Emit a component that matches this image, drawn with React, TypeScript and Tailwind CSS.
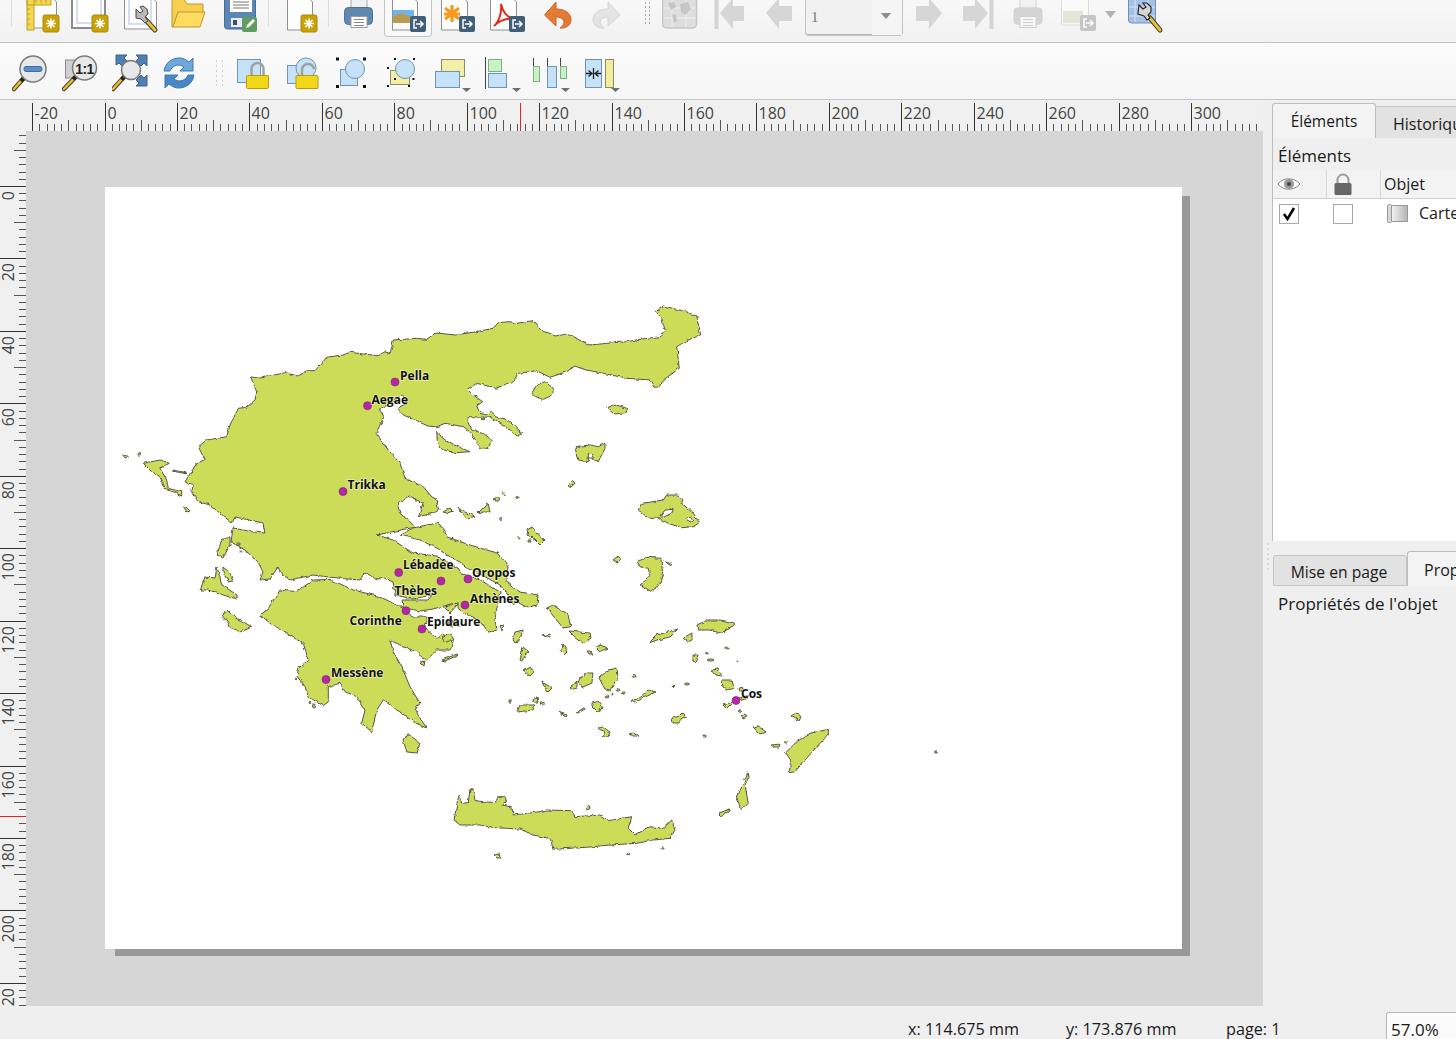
import React from "react";

const LAND: string[] = [
  // mainland
  "250.7,377 260,378 270,376 285,372.7 298,376 308,370.7 315,370.7 326.7,357.3 343,355 350,352.3 378,355.7 385,351.7 390,354 393.3,340 416.7,338.3 426.7,339.3 435,333.3 440,333.3 455,335 473,332.3 493,328.3 498.3,322.7 510,321.7 516.7,323.3 533,320.7 541.7,331 550,333.3 555,336 566.7,334 590,345 606.7,343.3 626.7,341.7 640,339.3 660,336.7 665,330 661.7,318.3 656,311.7 663.3,306 686.7,311.7 696.7,316.7 700.7,335 686.7,340.7 676.7,346.7 679.3,368.3 663.3,380 660,386.7 654,387.3 650,380 626.7,378.3 603.3,373.3 583.3,369.3 575,366 566.7,371.7 550,377.3 536.7,370.7 518.3,373.3 515,380 496.7,388.3 476.7,383.3 467.3,389.3 473.3,395 482.7,401.7 476.7,406 480,413.3 486.7,415 491.7,410.7 495,416.7 506.7,419.3 522.7,433.3 517.3,436 508.3,428.3 490,417.3 468.3,416.7 466.7,420 471.7,430 483.3,433.3 491.7,440 488.3,448.3 480,448.3 471.7,433.3 463.3,426.7 445,423.3 436.7,426.7 428,426 403.3,415 397.3,408.3 406.7,403.3 403.3,395 396.7,398.3 386.7,405 379.3,409.3 384,416.7 376,433.3 388.3,450 400,463.3 405,478.3 423.3,486.7 432,497 436,499 439,510 434,513 418.3,516.7 423.3,503.3 410,496.7 397.3,503.3 400,513.3 411.7,523.3 415,527 377,535 393,540 413,553 437,556 458,568 462,574 470,576 482,581 500,592 497,607 495,620 497,630 488,632 482,623 473,617 463,613 458,608 458,602 433,609 420,611 410,609 403,607 402,600 428,600 432,595 413,599 395,595 393,582 382,577 377,580 365,572 360,580 337,578 313,575 290,580 282,575 278,567 270,579 260,580 263,572 258,562 245,550 231,542 232,535 233,528 253,532 265,533 263,523 235,517 232,523 210,505 198.3,501.7 191.7,491.7 193.3,485 185,481.7 196.7,463.3 205,460 198.3,446.7 206.7,440 226.7,436.7 230,425 238.3,408.3 246.7,407.3 255,400 256.7,391.7",
  // Peloponnese
  "260.7,615 268.3,608.3 280,590 296.7,591.7 313.3,580 330,579.3 353.3,590 380,596.7 406.7,610 411.7,616.7 428.3,617.3 423.3,626.7 436.7,638.3 443,634 453.3,643.3 450,650 436.7,650 426.7,660 416.7,651.7 403.3,646.7 390,640 393.3,651.7 401.7,666.7 410,686.7 420,703.3 415,710 426.7,728.3 413.3,721.7 400,712 383.3,700 376.7,710 371.7,731.7 361.7,723.3 365,710 356.7,696.7 345,691.7 340,683.3 328.3,686.7 328.3,701.7 323.3,705.7 308.3,696.7 305,686.7 297.3,676.7 298.3,668.3 308.3,660 303.3,643.3 283.3,631.7 270,623.3",
  // Evia
  "400,535 413,528 437,523 443,527 447,537 470,545 497,553 508,565 507,582 520,592 538,595 537,605 528,608 517,602 513,605 508,595 500,585 482,575 470,570 460,562 447,555 437,548 420,540",
  // Ionian
  "143.3,463.3 160,460 169.3,463.3 160,468.3 166.7,480 168.3,488.3 181.7,491.7 181.7,496 165,488.3 160,476.7 151.7,471.7",
  "223,538 230,538 230,545 223,558 217,555 220,545",
  "217,567 222,585 237,595 237,599 223,595 217,592 207,590 200,590 205,577 215,578",
  "223,567 230,573 233,580 228,581 223,573",
  "222,615 228,610 235,617 252,627 240,632 230,627",
  "403,740 407,733 420,743 417,753 407,752",
  "183,506 186,507 190,511 187,512",
  "173,470 187,473 187,474 173,471",
  // Saronic
  "445,608 455,602 458,604 450,613",
  "449,622 458,620 459,626 451,627",
  "442,638 450,633 454,640 445,642",
  "442,660 457,654 458,655 445,661",
  "420,662 425,661 424,666",
  "500,627 503,624 502,631",
  // North Aegean
  "531.7,393.3 536.7,385 545,381.7 553.3,388.3 552.7,395 543.3,399.3 535,396.7",
  "607.7,407.3 616.7,405 626.7,408.3 625,412.7 615,414",
  "436.7,430.7 441.7,437.3 450,443.3 470,451.7 456.7,452.7 443.3,450 440,448.3 437.3,441.7",
  "575,446.7 590,445 598.3,446.7 605,443.3 605,448.3 598.3,461.7 593.3,460 588.3,453.3 588.3,461.7 578.3,460 576.7,456.7",
  "568.3,485 572.7,480.7 575,483.3 570,487.7",
  "638.3,510 641.7,503.3 663.3,500 666.7,495 678.3,495 683.3,500 681.7,503.3 693.3,513.3 699.3,522.7 693.3,526.7 681.7,527.7 670,524 658.3,518.3 646.7,516.7",
  "637.3,561.7 646.7,557.3 661.7,558.3 663.3,570 660,583.3 651.7,591.7 640,585 650,576.7 648.3,568.3 640,566.7",
  "665,561.7 671.7,564 671,565.5 666,563",
  "613,560 618,556 621,560 617,563",
  "443,512 450,508 453,511 447,513",
  "458,508 465,512 475,516 468,519 463,515",
  "478,513 488,503 490,512 483,512",
  "527,530 532,527 537,533 545,540 540,545 535,540 528,535",
  // Cyclades, Dodecanese
  "546.7,608 553,605 568,615 570.7,626.7 563,628 555,618",
  "569,631 590,633 591,638 583,643 575,637",
  "513,640 515,632 523,630 522,637 515,643",
  "520,660 523,647 529,652 525,655 522,661",
  "560,650 563,644 568,652 565,655",
  "543,636 550,634 551,637",
  "595,647 600,645 608,648 600,652",
  "587,651 591,651 593,654 589,654",
  "524,670 530,667 534,672 530,676 526,673",
  "542,682 552,688 548,692 545,688",
  "580,678 587,673 593,673 592,683 583,687 578,683",
  "570,687 577,681 577,688 573,689",
  "599,678 608,670 617,668 618,678 610,690 605,689",
  "517,712 520,705 527,705 535,705 533,710 518,712",
  "533,699 537,698 538,702 534,702",
  "540,702 544,702 544,705 541,705",
  "576,713 585,707 585,709 578,713",
  "558,712 567,715 566,717 559,713",
  "592,702 598,701 603,708 597,711 592,706",
  "631,701 640,697 648,690 656,692 643,698 635,703",
  "597,728 602,726 610,732 608,737 602,737 606,732 601,730",
  "629,734 633,733 639,736 632,736",
  "672,718 680,716 683,713 687,717 682,718 678,723 673,723",
  "649,643 657,635 678,629 670,637 657,640",
  "697,625 707,620 720,620 735,623 733,627 720,633 710,630 698,630",
  "683,638 692,633 692,640 688,642",
  "693,655 698,655 695,663 693,662",
  "712,670 718,669 722,676 716,675",
  "722,680 732,680 734,688 727,690 723,687",
  "723,705 732,702 742,697 750,695 748,698 733,703 727,709",
  "741,716 745,714 747,717 743,719",
  "753,727 758,726 766,732 760,734",
  "791,716 797,712 801,717 799,721",
  "772,745 780,744 779,747 773,747",
  "785.7,752.7 796.7,741.7 810,733.3 828.3,729.3 828.3,735 816.7,746.7 806.7,758.3 795,771.7 789.3,772.7 790.7,760",
  "748,771.7 749,776.7 745,785 748.3,803.3 741.7,810 736.7,798.3 743.3,783.3",
  "719,813 730,809 728,812 720,816",
  // Crete
  "454,820 456.7,805 459.3,795 461.7,803.3 468.3,802.7 470,789.3 473.3,790 475,800.7 495,802.7 498.3,796.7 505,796.7 506.7,801.7 501.7,805 511.7,806.7 513.3,815 540,811.7 546.7,810 571.7,810.7 575,816.7 600,815 608.3,820.7 631.7,816.7 628.3,828.3 635,835 650,826.7 663.3,828.3 671.7,820 675,830 670,838.3 653.3,840 636.7,843.3 610,845 586.7,847.3 553.3,849.3 550,838.3 533.3,835 520,829 495,827.7 480,825 460,825",
  "494,855 499,854 501,858 497,858",
];

const HOLES = [
  "660,516.7 665,510 673.3,509.3 671.7,513.3 663.3,517.3",
  "686.7,518 690,516.5 693,521 690,522",
  "588,454 592,453 594,458 590,458",
];

const SPECKS: [number, number, number, number][] = [
  [125, 456.7, 2, 1.2], [139.3, 454, 1.3, 1], [483, 419, 2, 0.8], [497, 499, 2.5, 2.2], [504, 494, 1.6, 2], [517, 497, 1, 1.6],
  [501, 519, 1.2, 1.5], [519, 538, 1.2, 1], [530, 541, 1, 1.3], [634, 676, 2, 1.3], [673, 686, 1.2, 0.7], [687, 684, 2.5, 1], [704, 736, 1.2, 1.2],
  [936, 752, 1.5, 1.2], [510, 701, 1.2, 1.2], [607, 697, 2, 1], [612, 694, 1, 1], [618, 690, 2, 1], [623, 693, 2, 1], [707, 653, 1.5, 1], [710, 660, 3, 1],
  [727, 648, 2.5, 1], [737, 661, 1, 1], [741, 689, 2, 1.5], [740, 711, 1.5, 1.2], [786, 742, 1.5, 1], [588, 808, 2, 1.5], [628, 854, 2, 0.8], [662, 848, 1.2, 1],
  [314, 706, 1.5, 2], [310, 703, 0.8, 0.8], [296, 679, 0.8, 0.8], [238, 544, 2.5, 1], [241, 552, 1, 1],
];

const CITIES: [number, number][] = [
  [395, 382], [367.5, 405.7], [343, 491.5], [398.7, 572.5], [441, 581], [468, 579], [465, 605], [406, 610.7], [422, 629], [326, 679.5], [736, 700.5],
];

const LABELS: [string, number, number][] = [
  ["Pella", 400, 380], ["Aegae", 371.5, 404], ["Trikka", 347.5, 489], ["Lébadée", 403, 569], ["Thèbes", 394.5, 595], ["Oropos", 472, 577],
  ["Athènes", 470, 603], ["Corinthe", 349.5, 625], ["Epidaure", 427, 626], ["Messène", 331, 677], ["Cos", 741, 698],
];

function GreeceMap() {
  return (
    <svg className="block w-full h-full" viewBox="105 187 1077 762">
      <defs>
        <filter id="coast" filterUnits="userSpaceOnUse" x="105" y="187" width="1077" height="762" colorInterpolationFilters="sRGB">
          <feTurbulence type="fractalNoise" baseFrequency="0.2" numOctaves="2" seed="4" result="n" />
          <feDisplacementMap in="SourceGraphic" in2="n" scale="3.5" xChannelSelector="R" yChannelSelector="G" />
          <feGaussianBlur stdDeviation="0.3" />
        </filter>
      </defs>
      <g filter="url(#coast)" fill="#ccdc58" stroke="#55554c" strokeWidth="1" strokeLinejoin="round">
        {LAND.map((p, i) => (
          <polygon key={i} points={p} />
        ))}
        {HOLES.map((p, i) => (
          <polygon key={i} points={p} fill="#ffffff" />
        ))}
        {SPECKS.map((s, i) => (
          <ellipse key={i} cx={s[0]} cy={s[1]} rx={s[2]} ry={s[3]} />
        ))}
      </g>
      {CITIES.map(([x, y], i) => (
        <circle key={i} cx={x} cy={y} r="4" fill="#c020ae" stroke="#5f3f5f" strokeWidth="0.7" />
      ))}
      {LABELS.map(([t, x, y]) => (
        <text key={t} x={x} y={y} fontFamily="'Open Sans',sans-serif" fontWeight="700" fontSize="12" fill="#111" stroke="#ffffff" strokeOpacity="0.55" strokeWidth="1.6" paintOrder="stroke">
          {t}
        </text>
      ))}
    </svg>
  );
}

/* ---------- toolbar drawing helpers (screen coordinates) ---------- */
function Page({ x, y, w, h }: { x: number; y: number; w: number; h: number }) {
  return <path d={`M${x + 0.5} ${y}h${w - 8}l8 8v${h - 8}h-${w}z`} fill="#fdfdfd" stroke="#8f8f8f" />;
}
function GoldBadge({ x, y }: { x: number; y: number }) {
  const cx = x + 8;
  const cy = y + 8.5;
  return (
    <g>
      <rect x={x} y={y} width="16" height="17" rx="2" fill="#c9a208" stroke="#a98a08" />
      <path d={`M${cx - 5} ${cy}h10M${cx} ${cy - 5}v10M${cx - 3.5} ${cy - 3.5}l7 7M${cx + 3.5} ${cy - 3.5}l-7 7`} stroke="#fff" strokeWidth="1.5" />
    </g>
  );
}
function ExportBadge({ x, y, fill = "#3f6078" }: { x: number; y: number; fill?: string }) {
  return (
    <g>
      <rect x={x} y={y} width="16" height="16" rx="2" fill={fill} />
      <path d={`M${x + 7} ${y + 4}h-3v8h3M${x + 6} ${y + 8}h6M${x + 10} ${y + 5}l3 3l-3 3`} fill="none" stroke="#fff" strokeWidth="1.5" />
    </g>
  );
}
function DropArrow({ x, y }: { x: number; y: number }) {
  return <path d={`M${x} ${y}h9l-4.5 4z`} fill="#6f6f6f" />;
}
function Lens({ cx, cy, r, hx, hy }: { cx: number; cy: number; r: number; hx: number; hy: number }) {
  const sx = cx - r * 0.7;
  const sy = cy + r * 0.7;
  return (
    <g>
      <path d={`M${sx} ${sy}L${hx} ${hy}`} stroke="#4a4020" strokeWidth="4.5" strokeLinecap="round" />
      <path d={`M${sx - 3} ${sy + 3}L${hx} ${hy}`} stroke="#e6b93a" strokeWidth="2.5" strokeLinecap="round" />
      <path d={`M${sx} ${sy}l-3 3`} stroke="#222" strokeWidth="4" />
      <circle cx={cx} cy={cy} r={r} fill="#e8e8e8" stroke="#7a7a7a" strokeWidth="1.5" />
    </g>
  );
}
function Padlock({ x, open }: { x: number; open?: boolean }) {
  return (
    <g>
      {open ? (
        <path d={`M${x + 6} 75v-4a6 6 0 0 1 12 -2`} fill="none" stroke="#a0a0a0" strokeWidth="2.5" />
      ) : (
        <path d={`M${x + 5} 76v-7a6 6 0 0 1 12 0v7`} fill="none" stroke="#a0a0a0" strokeWidth="2.5" />
      )}
      <rect x={x} y="75.5" width="22" height="13" rx="1" fill="#f0d818" stroke="#b99a10" />
    </g>
  );
}

function Sep() {
  return <div className="w-px h-[27px] bg-[#dcdcdc] shrink-0" />;
}

function ToolbarOne() {
  const box = "shrink-0 h-[43px]";
  return (
    <div className="flex items-start h-[43px] border-b border-[#c4c4c4] bg-linear-to-b from-[#f8f8f8] to-[#f1f1f1] overflow-hidden">
      <div className="ml-[11px]"><Sep /></div>
      <svg className={`${box} ml-[12px] w-[36px]`} viewBox="24 0 36 43">
        <Page x={30} y={-6} w={26} h={34} />
        <path d="M27 -2h7v32h-7zM27 -2h24v7h-24z" fill="#f5d650" stroke="#c09f1e" />
        <path d="M27 9h3M27 14h3M27 19h3M27 24h3M36 0v3M41 0v3M46 0v3" stroke="#c09f1e" />
        <GoldBadge x={43} y={15} />
      </svg>
      <svg className={`${box} ml-[11px] w-[38px]`} viewBox="71 0 38 43">
        <rect x="72" y="-5" width="33" height="33" fill="#fff" stroke="#8c8c8c" strokeWidth="2" />
        <rect x="77" y="-2" width="24" height="25" fill="#fff" stroke="#c6d4f0" strokeWidth="1.5" />
        <GoldBadge x={92} y={15} />
      </svg>
      <svg className={`${box} ml-[15px] w-[36px]`} viewBox="124 0 36 43">
        <Page x={124} y={-6} w={32} h={35} />
        <rect x="129" y="-2" width="22" height="26" fill="#fff" stroke="#c6d4f0" strokeWidth="1.5" />
        <path d="M144 18L155 30" stroke="#4a4020" strokeWidth="5" strokeLinecap="round" />
        <path d="M145 19L155 30" stroke="#e6bf46" strokeWidth="3" strokeLinecap="round" />
        <path d="M136 9l4 4l3 -2l-3 -4l3 -1l4 3l1 5l-3 3l3 4l-3 2l-4 -4l-5 -1z" fill="#b9b9b9" stroke="#444" strokeWidth="1" />
      </svg>
      <svg className={`${box} ml-[11px] w-[36px]`} viewBox="171 0 36 43">
        <path d="M172 27V-2h11l4 6h16v9H178l-5 14z" fill="#f5cf50" stroke="#bd9a2c" />
        <path d="M173 27l5 -15h27l-5 15z" fill="#ffdc60" stroke="#bd9a2c" />
      </svg>
      <svg className={`${box} ml-[17px] w-[34px]`} viewBox="224 0 34 43">
        <path d="M224.5 -4h31v30a3 3 0 0 1 -3 3h-25a3 3 0 0 1 -3 -3z" fill="#5c86b6" stroke="#456a94" />
        <rect x="230" y="-3" width="22" height="15" fill="#fff" />
        <path d="M233 2h16M233 5h16M233 8h16" stroke="#777" />
        <rect x="231" y="18" width="12" height="9" fill="#e9eef4" />
        <rect x="233" y="20" width="4" height="5" fill="#3e4e62" />
        <rect x="242" y="17" width="15" height="15" rx="2" fill="#5f9c62" />
        <path d="M246 28l1 -3l6 -6l2 2l-6 6z" fill="#fff" />
      </svg>
      <div className="ml-[10px]"><Sep /></div>
      <svg className={`${box} ml-[18px] w-[31px]`} viewBox="287 0 31 43">
        <Page x={287} y={-6} w={25} h={36} />
        <GoldBadge x={301} y={15} />
      </svg>
      <div className="ml-[10px]"><Sep /></div>
      <svg className={`${box} ml-[15px] w-[30px]`} viewBox="344 0 30 43">
        <rect x="351" y="-3" width="16" height="11" fill="#f0f0f0" stroke="#aaa" />
        <rect x="344.5" y="7.500" width="28" height="17" rx="4" fill="#5f88b0" stroke="#4c7096" />
        <rect x="351" y="16.500" width="16" height="11" fill="#fff" stroke="#999" />
        <path d="M354 19.500h10M354 22.500h10M354 25.500h10" stroke="#888" />
      </svg>
      <div className="ml-[10px] w-[48px] h-[38px] -mt-[1px] shrink-0 border border-[#c4c4c4] rounded-b-[3px] bg-[#f9f9f9]">
        <svg className="w-[46px] h-[37px] block" viewBox="385 0 46 37">
          <Page x={392} y={-6} w={25} h={36} />
          <rect x="393" y="10" width="21" height="7" fill="#6fb4ec" />
          <path d="M393 17l7 -4l6 2l8 3v5h-21z" fill="#b59c50" />
          <ExportBadge x={410} y={16} />
        </svg>
      </div>
      <svg className={`${box} ml-[9px] w-[35px]`} viewBox="441 0 35 43">
        <Page x={441} y={-6} w={26} h={36} />
        <path d="M452 5v17M445 8l14 11M459 8l-14 11M444 14h16" stroke="#f89a1c" strokeWidth="3.2" />
        <ExportBadge x={459} y={16} />
      </svg>
      <svg className={`${box} ml-[14px] w-[35px]`} viewBox="490 0 35 43">
        <Page x={490} y={-6} w={26} h={36} />
        <path d="M494 26c5 -4 8 -14 7 -22c2 8 5 12 12 15c-7 -1 -13 1 -19 7z" fill="none" stroke="#e02b20" strokeWidth="2" />
        <ExportBadge x={509} y={16} />
      </svg>
      <svg className={`${box} ml-[19px] w-[28px]`} viewBox="544 0 28 43">
        <path d="M544.5 15L556 2v7c9 0 15 4 15 11c0 4 -3 7 -8 8l-3 0c3 -2 4 -4 4 -6c0 -3 -4 -5 -8 -5v9z" fill="#e57a35" stroke="#c9672a" />
      </svg>
      <svg className={`${box} ml-[20px] w-[29px]`} viewBox="592 0 29 43">
        <path d="M620 15L608 2v7c-9 0 -15 4 -15 11c0 4 3 7 8 8l3 0c-3 -2 -4 -4 -4 -6c0 -3 4 -5 8 -5v9z" fill="#e3e4e3" stroke="#d4d4d4" />
      </svg>
      <svg className="shrink-0 h-[43px] ml-[24px] w-[6px]" viewBox="645 0 6 43">
        <path d="M645 3h1M649 3h1M645 7h1M649 7h1M645 11h1M649 11h1M645 15h1M649 15h1M645 19h1M649 19h1M645 23h1M649 23h1" stroke="#b0b0b0" strokeWidth="2" />
      </svg>
      <svg className={`${box} ml-[11px] w-[36px]`} viewBox="662 0 36 43">
        <rect x="662.5" y="-4" width="34" height="32" rx="4" fill="#dedede" stroke="#c6c6c6" strokeWidth="1.5" />
        <path d="M664 8h31M664 18h31M672 -3v30M686 -3v30" stroke="#f0f0f0" />
        <path d="M668 3l6 -1l2 5l-5 3zM680 4l8 -2l3 7l-6 6l-4 -3zM672 14l4 1l1 6l-3 2z" fill="#c6c6c6" />
      </svg>
      <svg className={`${box} ml-[16px] w-[31px]`} viewBox="714 0 31 43">
        <rect x="714.5" y="-2" width="4" height="31" fill="#d4d4d4" />
        <path d="M720 13L733 -2v8h11v15h-11v8z" fill="#d6d6d6" />
      </svg>
      <svg className={`${box} ml-[20px] w-[28px]`} viewBox="765 0 28 43">
        <path d="M766 13L779 -2v8h13v15h-13v8z" fill="#d6d6d6" />
      </svg>
      <div className="ml-[12px] w-[98px] h-[37px] -mt-[1px] shrink-0 flex border border-[#c4c4c4] rounded-b-[3px] bg-[#f1f1f1] text-[#777] text-[15px]">
        <div className="w-[66px] pl-[5px] pt-[7px] leading-[20px] border-b border-[#b5b5b5] rounded-bl-[3px] font-['Liberation_Serif',serif]">1</div>
        <div className="flex-1 bg-[#f5f5f5] flex items-start justify-center pt-[12px] pr-[3px]">
          <svg className="w-[12px] h-[8px]" viewBox="0 0 12 8"><path d="M1 1h10l-5 6z" fill="#8c8c8c" /></svg>
        </div>
      </div>
      <svg className={`${box} ml-[13px] w-[27px]`} viewBox="916 0 27 43">
        <path d="M942 13L929 -2v8h-13v15h13v8z" fill="#d6d6d6" />
      </svg>
      <svg className={`${box} ml-[20px] w-[31px]`} viewBox="963 0 31 43">
        <rect x="989.5" y="-2" width="4" height="31" fill="#d4d4d4" />
        <path d="M988 13L975 -2v8h-12v15h12v8z" fill="#d6d6d6" />
      </svg>
      <svg className={`${box} ml-[19px] w-[31px]`} viewBox="1013 0 31 43">
        <rect x="1020" y="-3" width="16" height="11" fill="#f2f2f2" stroke="#d4d4d4" />
        <rect x="1013.5" y="7.500" width="29" height="17" rx="4" fill="#d4d4d4" />
        <rect x="1020" y="16.500" width="16" height="11" fill="#f7f7f7" stroke="#cfcfcf" />
        <path d="M1023 19.500h10M1023 22.500h10M1023 25.500h10" stroke="#cfcfcf" />
      </svg>
      <svg className={`${box} ml-[17px] w-[36px]`} viewBox="1061 0 36 43">
        <path d="M1061.5 -5h22l5 5v25h-27z" fill="#fafafa" stroke="#dcdcdc" />
        <rect x="1063" y="11" width="20" height="12" fill="#e4e4da" />
        <ExportBadge x={1080} y={15} fill="#c6c6c6" />
      </svg>
      <svg className={`${box} ml-[7px] w-[13px]`} viewBox="1104 0 13 43">
        <path d="M1105 11h11l-5.5 7z" fill="#b3b3b3" />
      </svg>
      <svg className={`${box} ml-[11px] w-[36px]`} viewBox="1128 0 36 43">
        <rect x="1128.5" y="-4" width="27" height="27" rx="3" fill="#a6c0e6" stroke="#6e8fc0" />
        <path d="M1135 -3v25M1148 -3v25M1129 7h26M1129 16h26" stroke="#d7e3f5" />
        <path d="M1150 18L1160 30" stroke="#3c3418" strokeWidth="5" strokeLinecap="round" />
        <path d="M1150 18L1160 30" stroke="#e6bf46" strokeWidth="3" strokeLinecap="round" />
        <path d="M1139 5l4 4l3 -2l-3 -4l4 0l4 4l0 5l-3 3l2 3l-3 2l-3 -4l-6 -2z" fill="#d4d4d4" stroke="#222" strokeWidth="1.1" />
      </svg>
    </div>
  );
}

function ToolbarTwo() {
  const box = "shrink-0 h-[56px]";
  return (
    <div className="flex items-start h-[57px] border-b border-[#c4c4c4] bg-linear-to-b from-[#fbfbfb] to-[#f6f6f6]">
      <svg className={`${box} ml-[12px] w-[36px]`} viewBox="12 43 36 56">
        <Lens cx={33} cy={69} r={13} hx={14} hy={89} />
        <rect x="24" y="66.5" width="18" height="5" rx="2" fill="#5d8cc6" stroke="#3e6ea8" />
      </svg>
      <svg className={`${box} ml-[14px] w-[36px]`} viewBox="62 43 36 56">
        <rect x="65.5" y="60" width="18" height="18" fill="#d0d0d0" stroke="#8a8a8a" />
        <Lens cx={84.5} cy={68} r={12} hx={64} hy={89} />
        <text x="84.5" y="73.5" textAnchor="middle" fontFamily="'Liberation Sans',sans-serif" fontWeight="700" fontSize="14" fill="#222" letterSpacing="-0.5">1:1</text>
      </svg>
      <svg className={`${box} ml-[14px] w-[36px]`} viewBox="112 43 36 56">
        <path d="M116 55h11l-3 3l3 3l-5 5l-3 -3l-3 2zM147 55v11l-3 -3l-3 3l-5 -5l3 -3l-3 -3zM147 86h-11l3 -3l-3 -3l5 -5l3 3l3 -3z" fill="#517fb3" stroke="#3a6390" />
        <Lens cx={131} cy={70} r={9.5} hx={113} hy={89} />
      </svg>
      <svg className={`${box} ml-[15px] w-[33px]`} viewBox="163 43 33 56">
        <path d="M164 71a15 15 0 0 1 25 -9l4 -4v13h-13l4 -4a9 9 0 0 0 -14 4z" fill="#6fa7da" stroke="#3c78b4" />
        <path d="M194 75a15 15 0 0 1 -25 9l-4 4v-13h13l-4 4a9 9 0 0 0 14 -4z" fill="#4a86c4" stroke="#3c78b4" />
      </svg>
      <svg className="shrink-0 h-[56px] ml-[20px] w-[8px]" viewBox="216 43 8 56">
        <path d="M216 61h1M222 61h1M216 66h1M222 66h1M216 71h1M222 71h1M216 76h1M222 76h1M216 81h1M222 81h1M216 85h1M222 85h1" stroke="#cfcfcf" strokeWidth="2" />
      </svg>
      <svg className={`${box} ml-[13px] w-[32px]`} viewBox="237 43 32 56">
        <rect x="237.5" y="59.5" width="23" height="23" fill="#c6e2f8" stroke="#6f94b0" />
        <Padlock x={246.5} />
      </svg>
      <svg className={`${box} ml-[18px] w-[32px]`} viewBox="287 43 32 56">
        <rect x="287.5" y="65.5" width="19" height="18" fill="#c6e2f8" stroke="#6f94b0" />
        <circle cx="306" cy="68" r="10" fill="#c6e2f8" stroke="#6f94b0" />
        <Padlock x={296} open />
      </svg>
      <svg className={`${box} ml-[17px] w-[30px]`} viewBox="336 43 30 56">
        <rect x="340.5" y="69.5" width="17" height="16" fill="#c6e2f8" stroke="#6f94b0" />
        <circle cx="355" cy="69" r="9.5" fill="#c6e2f8" stroke="#6f94b0" />
        <path d="M336 57.500h3v3h-3zM363 57.500h3v3h-3zM336 85h3v3h-3zM363 85h3v3h-3z" fill="#111" />
      </svg>
      <svg className={`${box} ml-[20px] w-[30px]`} viewBox="386 43 30 56">
        <rect x="390.500" y="70.500" width="19" height="14" fill="#f2eea4" stroke="#8e8e70" />
        <circle cx="405" cy="69" r="9.5" fill="#c6e2f8" stroke="#6f94b0" />
        <path d="M394 58h2v2h-2zM413 58h2v2h-2zM387 67h2v2h-2zM412.500 78h2v2h-2zM387 85h2v2h-2zM408 85h2v2h-2zM394 78h2v2h-2z" fill="#111" />
      </svg>
      <svg className={`${box} ml-[19px] w-[37px]`} viewBox="435 43 37 56">
        <rect x="441.500" y="59.500" width="23" height="17" fill="#f3f0a6" stroke="#8a8a6c" />
        <rect x="435.500" y="71.500" width="24" height="16" fill="#c6e2f8" stroke="#6f94b0" />
        <DropArrow x={462} y={88} />
      </svg>
      <svg className={`${box} ml-[12px] w-[37px]`} viewBox="484 43 37 56">
        <path d="M485.500 57v32" stroke="#444" />
        <rect x="488.500" y="59.500" width="13" height="12" fill="#c6f2c6" stroke="#80b080" />
        <rect x="488.500" y="73.500" width="18" height="14" fill="#c6e2f8" stroke="#6f94b0" />
        <DropArrow x={512} y={88} />
      </svg>
      <svg className={`${box} ml-[11px] w-[38px]`} viewBox="532 43 38 56">
        <path d="M533.500 58v10M547.500 58v10M560.500 58v10" stroke="#444" />
        <rect x="533.500" y="66.500" width="6" height="15" fill="#c6f2c6" stroke="#80b080" />
        <rect x="547.500" y="66.500" width="9" height="21" fill="#c6e2f8" stroke="#6f94b0" />
        <rect x="560.500" y="66.500" width="6" height="12" fill="#c6f2c6" stroke="#80b080" />
        <DropArrow x={561} y={88} />
      </svg>
      <svg className={`${box} ml-[14px] w-[37px]`} viewBox="584 43 37 56">
        <rect x="585.500" y="59.500" width="16" height="28" fill="#c6e2f8" stroke="#6f94b0" />
        <rect x="605.500" y="59.500" width="8" height="28" fill="#f3ec9c" stroke="#8a8a6c" />
        <path d="M593.500 68v11M586 73.500h6.500M588.500 70.500l3.500 3l-3.500 3M601 73.500h-6.500M598.500 70.500l-3.500 3l3.500 3" fill="none" stroke="#222" strokeWidth="1.3" />
        <DropArrow x={611} y={88} />
      </svg>
    </div>
  );
}

const MMS: number[] = [];
for (let m = -20; m <= 320; m += 2) MMS.push(m);
const VMMS: number[] = [];
for (let m = -14; m <= 226; m += 2) VMMS.push(m);

function TopRuler() {
  const px = (m: number) => Math.round(104.5 + m * 3.622);
  return (
    <svg className="block w-full h-[31px]" viewBox="0 100 1263 31">
      {MMS.map((m) => {
        const x = px(m) + 0.5;
        const y1 = m % 20 === 0 ? 103 : m % 10 === 0 ? 120 : 124;
        return <path key={m} d={`M${x} ${y1}V131`} stroke={m % 20 === 0 ? "#333" : "#555"} />;
      })}
      {MMS.filter((m) => m % 20 === 0).map((m) => (
        <text key={m} x={px(m) + 2.5} y={119} fontFamily="'Open Sans',sans-serif" fontSize="16" fill="#444">{m}</text>
      ))}
      <path d="M520.500 103V131" stroke="#e0222a" />
    </svg>
  );
}
function LeftRuler() {
  const py = (m: number) => Math.round(186 + m * 3.622);
  return (
    <svg className="block w-[26px] h-[875px]" viewBox="0 131 26 875">
      {VMMS.map((m) => {
        const y = py(m) + 0.5;
        const x1 = m % 20 === 0 ? 0 : m % 10 === 0 ? 14 : 19;
        return <path key={m} d={`M${x1} ${y}H26`} stroke={m % 20 === 0 ? "#333" : "#555"} />;
      })}
      {VMMS.filter((m) => m % 20 === 0).map((m) => (
        <text key={m} transform={`translate(14 ${py(m) + 5}) rotate(-90)`} textAnchor="end" fontFamily="'Open Sans',sans-serif" fontSize="16" fill="#444">{m}</text>
      ))}
      <path d="M0 816.500H26" stroke="#e0222a" />
    </svg>
  );
}

function Panel() {
  return (
    <div className="w-[193px] shrink-0 bg-[#efefef] flex flex-col text-[16px] text-[#1a1a1a] overflow-hidden">
      <div className="h-[441px] pl-[9px] flex flex-col shrink-0">
        <div className="flex items-end pt-[3px] h-[38px] shrink-0">
          <div className="w-[104px] h-[35px] shrink-0 bg-[#f3f3f3] border border-b-0 border-[#bdbdbd] rounded-t-[3px] text-center text-[15.5px] leading-[35px]">Éléments</div>
          <div className="flex-1 h-[32px] pl-[17px] bg-[#e2e2e2] border-t border-[#c8c8c8] leading-[34px] whitespace-nowrap">Historique</div>
        </div>
        <div className="flex-1 flex flex-col border-l border-[#bdbdbd]">
          <div className="h-[32px] pl-[5px] leading-[36px] text-[17px] shrink-0">Éléments</div>
          <div className="flex h-[29px] shrink-0 bg-[#f3f3f3] border-b border-[#d0d0d0]">
            <div className="w-[54px] flex items-center pl-[4px] border-r border-[#d8d8d8]">
              <svg className="w-[24px] h-[16px]" viewBox="0 0 24 16">
                <path d="M1 8C6 1 17 1 23 8C17 15 6 15 1 8z" fill="#fff" stroke="#888" />
                <circle cx="12" cy="8" r="5" fill="#999" />
                <circle cx="12" cy="8" r="2" fill="#444" />
              </svg>
            </div>
            <div className="w-[54px] flex items-center pl-[6px] border-r border-[#d8d8d8]">
              <svg className="w-[20px] h-[24px]" viewBox="0 0 20 24">
                <path d="M4.500 12V8a5.500 5.500 0 0 1 11 0v4" fill="none" stroke="#9a9a9a" strokeWidth="2" />
                <rect x="1.500" y="11" width="17" height="12" rx="1.500" fill="#666" />
              </svg>
            </div>
            <div className="flex-1 pl-[3px] leading-[28px]">Objet</div>
          </div>
          <div className="flex-1 bg-white flex items-start pt-[5px] pl-[6px]">
            <div className="w-[20px] h-[20px] shrink-0 border border-[#a8a8a8] flex items-center justify-center bg-white">
              <svg className="w-[14px] h-[14px]" viewBox="0 0 14 14"><path d="M2 7l3.500 5L12 1" fill="none" stroke="#000" strokeWidth="2.500" /></svg>
            </div>
            <div className="ml-[34px] w-[20px] h-[20px] shrink-0 border border-[#a8a8a8] bg-white" />
            <svg className="ml-[34px] w-[21px] h-[19px] shrink-0" viewBox="0 0 21 19">
              <defs>
                <linearGradient id="bk" x1="0" x2="1">
                  <stop offset="0" stopColor="#f2f2f2" />
                  <stop offset="1" stopColor="#b4b4b4" />
                </linearGradient>
              </defs>
              <rect x="4.500" y="1.500" width="16" height="16" fill="url(#bk)" stroke="#999" />
              <path d="M0.500 3a2 2 0 0 1 4 -1.500v16a2 2 0 0 1 -4 -1z" fill="#d8d8d8" stroke="#999" />
            </svg>
            <span className="ml-[11px] leading-[18px] whitespace-nowrap">Carte</span>
          </div>
        </div>
      </div>
      <div className="h-[10px] shrink-0" />
      <div className="flex items-end h-[35px] pl-[10px] shrink-0 relative">
        <svg className="absolute left-[4px] -top-[8px] w-[2px] h-[28px]" viewBox="0 0 2 28">
          <path d="M0 1h2M0 6h2M0 11h2M0 16h2M0 21h2M0 26h2" stroke="#c4c4c4" />
        </svg>
        <div className="w-[134px] h-[31px] shrink-0 bg-[#e2e2e2] border border-[#c4c4c4] rounded-t-[3px] text-center pr-[2px] text-[15.7px] leading-[32px]">Mise en page</div>
        <div className="flex-1 h-[35px] pl-[16px] bg-[#f3f3f3] border-t border-l border-[#bdbdbd] rounded-tl-[3px] leading-[36px] whitespace-nowrap">Propriétés</div>
      </div>
      <div className="pl-[15px] pt-[5px] text-[17px] leading-[26px] whitespace-nowrap">Propriétés de l'objet</div>
    </div>
  );
}

function StatusBar() {
  return (
    <div className="h-[33px] shrink-0 flex items-start bg-[#efefef] text-[16.2px] text-[#1a1a1a] whitespace-nowrap">
      <span className="ml-[908px] w-[158px] pt-[12px] leading-[22px]">x: 114.675 mm</span>
      <span className="w-[160px] pt-[12px] leading-[22px]">y: 173.876 mm</span>
      <span className="w-[160px] pt-[12px] leading-[22px]">page: 1</span>
      <div className="mt-[6px] flex-1 h-[27px] pl-[4px] pt-[6px] text-[17px] leading-[22px] bg-[#fbfbfb] border-l border-t border-[#b8b8b8] rounded-tl-[3px]">57.0%</div>
    </div>
  );
}

export default function App() {
  return (
    <div className="w-[1456px] h-[1039px] flex flex-col overflow-hidden bg-[#f0f0f0] font-['Open_Sans',sans-serif]">
      <ToolbarOne />
      <ToolbarTwo />
      <div className="flex flex-1 min-h-0">
        <div className="flex-1 flex flex-col min-w-0">
          <div className="h-[31px] shrink-0 bg-[#f0f0f0]"><TopRuler /></div>
          <div className="flex flex-1 min-h-0">
            <div className="w-[26px] shrink-0 bg-[#f0f0f0] overflow-hidden"><LeftRuler /></div>
            <div className="flex-1 bg-[#d6d6d6] pl-[79px] pt-[56px] overflow-hidden">
              <div className="w-[1077px] h-[762px] bg-white shadow-[9px_8px_0_-1px_#999999]">
                <GreeceMap />
              </div>
            </div>
          </div>
        </div>
        <Panel />
      </div>
      <StatusBar />
    </div>
  );
}
